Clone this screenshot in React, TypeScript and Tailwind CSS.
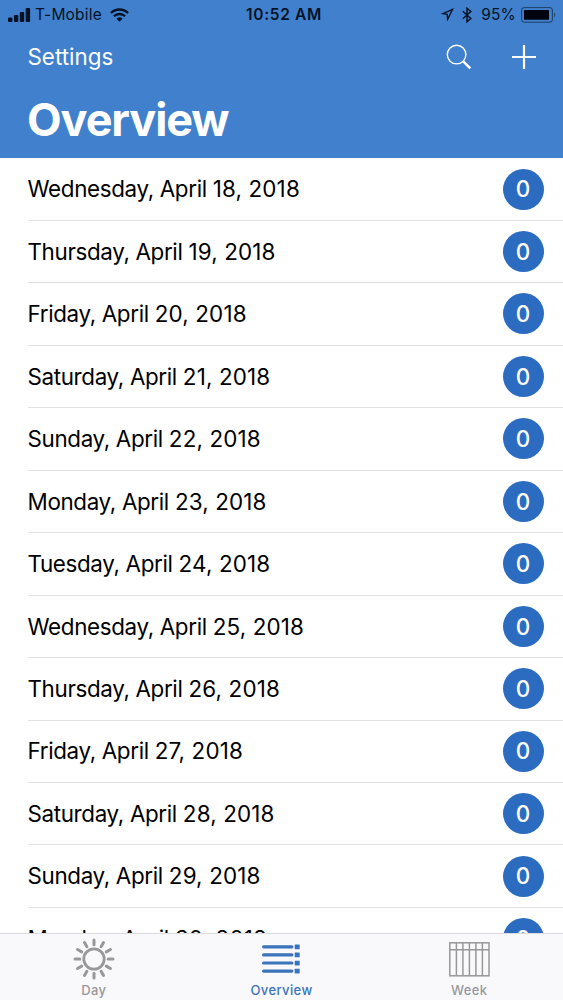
const days = [
  { name: 'Wednesday', date: '18, 2018' },
  { name: 'Thursday', date: '19, 2018' },
  { name: 'Friday', date: '20, 2018' },
  { name: 'Saturday', date: '21, 2018' },
  { name: 'Sunday', date: '22, 2018' },
  { name: 'Monday', date: '23, 2018' },
  { name: 'Tuesday', date: '24, 2018' },
  { name: 'Wednesday', date: '25, 2018' },
  { name: 'Thursday', date: '26, 2018' },
  { name: 'Friday', date: '27, 2018' },
  { name: 'Saturday', date: '28, 2018' },
  { name: 'Sunday', date: '29, 2018' },
  { name: 'Monday', date: '30, 2018' },
]

function StatusBar() {
  return (
    <div className="grid h-[29px] grid-cols-[1fr_auto_1fr] items-center pl-2 pr-[7px] text-[15.5px] leading-7 text-[#061327]">
      <div className="flex items-center">
        <svg width="23" height="14" viewBox="0 0 23 14" fill="currentColor">
          <rect x="0" y="9.5" width="4.4" height="4.5" rx="1" />
          <rect x="5.9" y="7" width="4.4" height="7" rx="1" />
          <rect x="11.8" y="4" width="4.4" height="10" rx="1" />
          <rect x="17.7" y="0" width="4.4" height="14" rx="1" />
        </svg>
        <span className="ml-1 tracking-[0.2px]">T-Mobile</span>
        <svg className="ml-2" width="19" height="14" viewBox="0 0 19 14" fill="none" stroke="currentColor" strokeWidth="2.3">
          <path d="M.9 5a12.3 12.3 0 0 1 17.2 0" />
          <path d="M3.9 8.3a8 8 0 0 1 11.2 0" />
          <path d="M9.5 13.8 6.5 10.7a4.3 4.3 0 0 1 6 0Z" fill="currentColor" stroke="none" />
        </svg>
      </div>
      <span className="ml-1 font-semibold tracking-[0.65px]">10:52 AM</span>
      <div className="flex items-center justify-end">
        <svg width="13" height="13" viewBox="0 0 13 13" fill="none" stroke="currentColor" strokeWidth="1.4" strokeLinejoin="miter">
          <path d="M11.6 1.3 1.8 5.6l4.4.7.4 5Z" />
        </svg>
        <svg className="ml-2" width="10" height="16" viewBox="0 0 10 16" fill="none" stroke="currentColor" strokeWidth="1.5">
          <path d="m.8 4.3 8 7.2L5 14.7V1.3l3.8 3.2-8 7.2" />
        </svg>
        <span className="ml-[9px] tracking-[0.2px]">95%</span>
        <svg className="ml-[5px]" width="35" height="16" viewBox="0 0 35 16">
          <rect x=".6" y=".6" width="30.8" height="14.6" rx="2.5" fill="none" stroke="currentColor" strokeOpacity=".6" />
          <rect x="3" y="3" width="25" height="9.8" rx=".6" fill="#000411" />
          <path d="M33 5.6c1.4.6 1.4 4 0 4.6Z" fill="currentColor" fillOpacity=".6" />
        </svg>
      </div>
    </div>
  )
}

function Header() {
  return (
    <header className="h-[157.5px] shrink-0 bg-[#4080cc]">
      <StatusBar />
      <div className="flex h-14 items-center justify-between pl-[27.5px] pr-[27px] text-white">
        <span className="text-[22.4px] tracking-[0px]">Settings</span>
        <div className="flex items-center gap-10">
          <svg width="26" height="26" viewBox="0 0 26 26" fill="none" stroke="currentColor">
            <circle cx="10.6" cy="10.6" r="9.3" strokeWidth="1.4" />
            <path d="m17 17.2 7.3 7.2" strokeWidth="2.5" />
          </svg>
          <svg width="24" height="24" viewBox="0 0 24 24" stroke="currentColor" strokeWidth="2.2">
            <path d="M12 0v24M0 12h24" />
          </svg>
        </div>
      </div>
      <h1 className="pl-[27px] pt-[5px] text-[45px] font-bold leading-[60px] tracking-[-1.1px] text-white">Overview</h1>
    </header>
  )
}

function SunIcon() {
  return (
    <svg width="42" height="42" viewBox="0 0 42 42" fill="none" stroke="currentColor" strokeWidth="3" strokeLinecap="round">
      <circle cx="21" cy="21" r="10.2" strokeWidth="2.8" />
      {[0, 30, 60, 90, 120, 150, 180, 210, 240, 270, 300, 330].map((angle) => (
        <path key={angle} d="M21 2v4.8" transform={`rotate(${angle} 21 21)`} />
      ))}
    </svg>
  )
}

function OverviewIcon() {
  return (
    <svg width="38" height="30" viewBox="0 0 38 30" fill="currentColor">
      {[0.5, 8.6, 16.7, 24.8].map((y) => (
        <g key={y}>
          <rect x="0" y={y + 0.7} width="31.5" height="3.2" rx="1.6" />
          <rect x="32.7" y={y} width="5" height="4.7" rx=".4" />
        </g>
      ))}
    </svg>
  )
}

function WeekIcon() {
  return (
    <svg width="41" height="35" viewBox="0 0 41 35" fill="none" stroke="currentColor" strokeWidth="1.5">
      <rect x=".8" y=".8" width="39.2" height="33" />
      <path d="M.8 7.7H40M7.4.8v33M13.9.8v33M20.4.8v33M26.9.8v33M33.4.8v33" />
    </svg>
  )
}

function TabBar() {
  return (
    <nav className="grid h-[67.5px] shrink-0 grid-cols-3 border-t border-[#dcdcdf] bg-[#f9f8fb] text-[13px] font-medium leading-4 text-[#98989c]">
      <div className="flex flex-col items-center">
        <div className="mt-[3px] flex h-[45px] items-center">
          <SunIcon />
        </div>
        <span className="tracking-[0.3px]">Day</span>
      </div>
      <div className="flex flex-col items-center text-[#3a74bb]">
        <div className="mt-[3px] flex h-[45px] items-center">
          <OverviewIcon />
        </div>
        <span className="tracking-[0.4px]">Overview</span>
      </div>
      <div className="flex flex-col items-center">
        <div className="mt-[3px] flex h-[45px] items-center">
          <WeekIcon />
        </div>
        <span className="tracking-[0.3px]">Week</span>
      </div>
    </nav>
  )
}

export default function App() {
  return (
    <div className="flex h-[1000px] w-[563px] flex-col overflow-hidden bg-white font-['Inter',sans-serif]">
      <Header />
      <main className="min-h-0 flex-1 overflow-hidden pt-[0.8px]">
        {days.map((day) => (
          <div key={`${day.name} ${day.date}`} className="ml-[27.5px] flex h-[62.47px] items-center justify-between border-b border-[#e2e2e4] pr-[19.5px]">
            <span className="whitespace-nowrap text-[22.4px] tracking-[-0.35px] text-black">
              {day.name}, April <span className="tracking-[0.15px]">{day.date}</span>
            </span>
            <span className="flex size-[41px] items-center justify-center rounded-full bg-[#2b6cc1] text-[22.4px] font-medium text-white">
              0
            </span>
          </div>
        ))}
      </main>
      <TabBar />
    </div>
  )
}
